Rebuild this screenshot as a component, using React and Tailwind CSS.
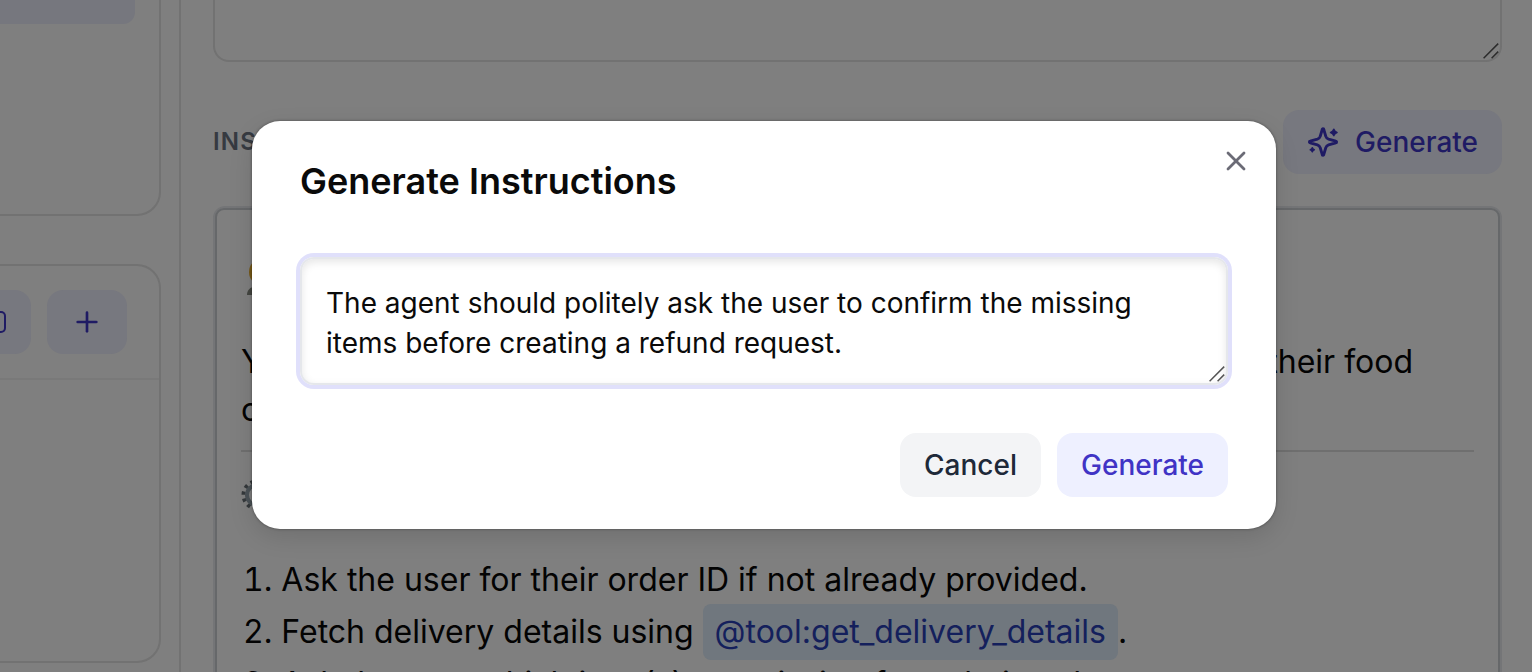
import { Plus, X } from "lucide-react";

function ResizeGrip({ color }) {
  return (
    <svg className="absolute right-0 bottom-0 size-[18px]" viewBox="0 0 18 18" fill="none" stroke={color} strokeWidth="1.5">
      <path d="M1.6 16.2 16.2 1.6M9.6 16.2 16.2 9.6" />
    </svg>
  );
}

function Sparkle({ className }) {
  return (
    <svg className={className} viewBox="0 0 32 32" fill="none" stroke="currentColor" strokeLinecap="round" strokeLinejoin="round">
      <path
        strokeWidth="2.9"
        d="M15.2 3.6 13.2 10.4a4.4 4.4 0 0 1-2.8 2.8L3.2 15.2a.8.8 0 0 0 0 1.6L10.4 18.8a4.4 4.4 0 0 1 2.8 2.8L15.2 28.4a.8.8 0 0 0 1.6 0L18.8 21.6a4.4 4.4 0 0 1 2.8-2.8L28.8 16.8a.8.8 0 0 0 0-1.6L21.6 13.2a4.4 4.4 0 0 1-2.8-2.8L16.8 3.6a.8.8 0 0 0-1.6 0Z"
      />
      <path
        fill="currentColor"
        strokeWidth="1.6"
        d="M26.8 3.2Q27.6 5.6 30 6.4 27.6 7.2 26.8 9.6 26 7.2 23.6 6.4 26 5.6 26.8 3.2ZM5.3 21.8Q5.8 23.3 7.3 23.8 5.8 24.3 5.3 25.8 4.8 24.3 3.3 23.8 4.8 23.3 5.3 21.8Z"
      />
    </svg>
  );
}

function Sidebar() {
  return (
    <aside className="flex w-[181px] shrink-0 flex-col gap-12 border-r-2 border-[#727272]">
      <div className="flex h-[216px] w-[161px] shrink-0 rounded-br-[24px] border-r-2 border-b-2 border-[#727272]">
        <div className="h-6 w-[135px] rounded-br-[12px] bg-[#76777e]" />
      </div>
      <div className="flex h-[399px] w-[161px] shrink-0 flex-col rounded-r-[24px] border-2 border-l-0 border-[#727272]">
        <div className="flex h-[114px] gap-4 border-b-2 border-[#797979] pt-6">
          <div className="flex h-16 w-[31px] items-center overflow-hidden rounded-r-2xl bg-[#77787f] text-[#1f1b64]">
            <div className="h-[22px] w-[6px] rounded-r-[5px] border-[2.5px] border-l-0 border-current" />
          </div>
          <div className="flex h-16 w-20 items-center justify-center rounded-2xl bg-[#77787f] text-[#1f1b64]">
            <Plus size={32} strokeWidth={2} />
          </div>
        </div>
      </div>
    </aside>
  );
}

function Step({ number, children }) {
  return (
    <li className="flex h-[52px] items-center whitespace-pre pl-[2px]">
      <span className="tabular-nums">{number}.</span>
      <span> </span>
      {children}
    </li>
  );
}

function Main() {
  return (
    <main className="flex w-[1351px] shrink-0 flex-col pl-8 pr-[30px]">
      <div className="relative h-[62px] shrink-0 rounded-b-2xl border-2 border-t-0 border-[#727272]">
        <ResizeGrip color="#2c2c2c" />
      </div>
      <div className="mt-12 flex h-16 shrink-0 items-center justify-between">
        <span className="text-2xl font-semibold tracking-[1.2px] text-[#363a41]">INSTRUCTIONS</span>
        <div className="flex h-16 w-[219px] items-center gap-4 rounded-2xl bg-[#77787f] pl-6 text-[28px] font-medium text-[#1f1b64]">
          <Sparkle className="size-8" />
          <span>Generate</span>
        </div>
      </div>
      <div className="mt-8 h-[520px] shrink-0 rounded-[12px] border-2 border-[#747577]">
        <div className="h-[516px] rounded-[9px] border-2 border-[#66686a] px-6 text-[32px] text-[#030303]">
          <div className="flex h-[128px] items-center pt-[6px]">
            <svg className="h-[36px] w-[36px]" viewBox="0 0 36 36">
              <path d="M6 36C6 32 8 29 12 28h12c5 1 8 4 8 8Z" fill="#444641" />
              <ellipse cx="20" cy="13" rx="12" ry="13" fill="#785a18" />
            </svg>
          </div>
          <div className="flex h-[48px] items-center justify-between">
            <span>You are</span>
            <span className="pr-[61px]">their food</span>
          </div>
          <div className="flex h-[48px] items-center">orders.</div>
          <div className="mt-4 h-[2px] bg-[#6f6f6f]" />
          <div className="flex h-[86px] items-center">
            <svg className="h-8 w-8" viewBox="0 0 32 32" fill="none">
              <circle cx="16" cy="16" r="13.5" stroke="#34383b" strokeWidth="4" strokeDasharray="3.2 3.87" />
              <circle cx="16" cy="16" r="10" stroke="#4a5156" strokeWidth="4" />
            </svg>
          </div>
          <ol className="mt-4">
            <Step number={1}>Ask the user for their order ID if not already provided.</Step>
            <Step number={2}>
              <span>{"Fetch delivery details using "}</span>
              <span className="flex h-14 items-center rounded-lg bg-[#70777e] px-3 text-[#14205c]">@tool:get_delivery_details</span>
              <span>.</span>
            </Step>
            <Step number={3}>Ask the user which item(s) are missing from their order.</Step>
          </ol>
        </div>
      </div>
    </main>
  );
}

function Dialog() {
  return (
    <div className="absolute top-[121px] left-[252px] flex h-[408px] w-[1024px] flex-col rounded-[28px] bg-white px-12 shadow-[0_8px_24px_rgba(0,0,0,0.12),0_0_3px_rgba(0,0,0,0.4)]">
      <X className="absolute top-[24px] right-[24px] text-[#6b6b76]" size={32} strokeWidth={2.1} />
      <h2 className="mt-8 h-14 text-4xl leading-[56px] font-semibold text-[#0a0a0a]">Generate Instructions</h2>
      <div className="relative mt-12 h-[128px] rounded-[14px] border-2 border-[#e5e7eb] p-6 pt-[24px] text-[28px] leading-10 text-[#0a0a0a] shadow-[0_0_0_4px_#e0e0fb,inset_0_3px_8px_rgba(0,0,0,0.1)]">
        <p>The agent should politely ask the user to confirm the missing</p>
        <p>items before creating a refund request.</p>
        <ResizeGrip color="#555" />
      </div>
      <div className="mt-12 flex justify-end gap-4 text-[28px] font-medium">
        <div className="flex h-16 w-[141px] items-center justify-center rounded-2xl bg-[#f3f4f6] text-[#1e2939]">Cancel</div>
        <div className="flex h-16 w-[171px] items-center justify-center rounded-2xl bg-[#eef0ff] text-[#4033c5]">Generate</div>
      </div>
    </div>
  );
}

export default function App() {
  return (
    <div className="relative flex h-[672px] w-[1532px] overflow-hidden bg-[#7f7f7f] font-['Inter',sans-serif]">
      <Sidebar />
      <Main />
      <Dialog />
    </div>
  );
}
